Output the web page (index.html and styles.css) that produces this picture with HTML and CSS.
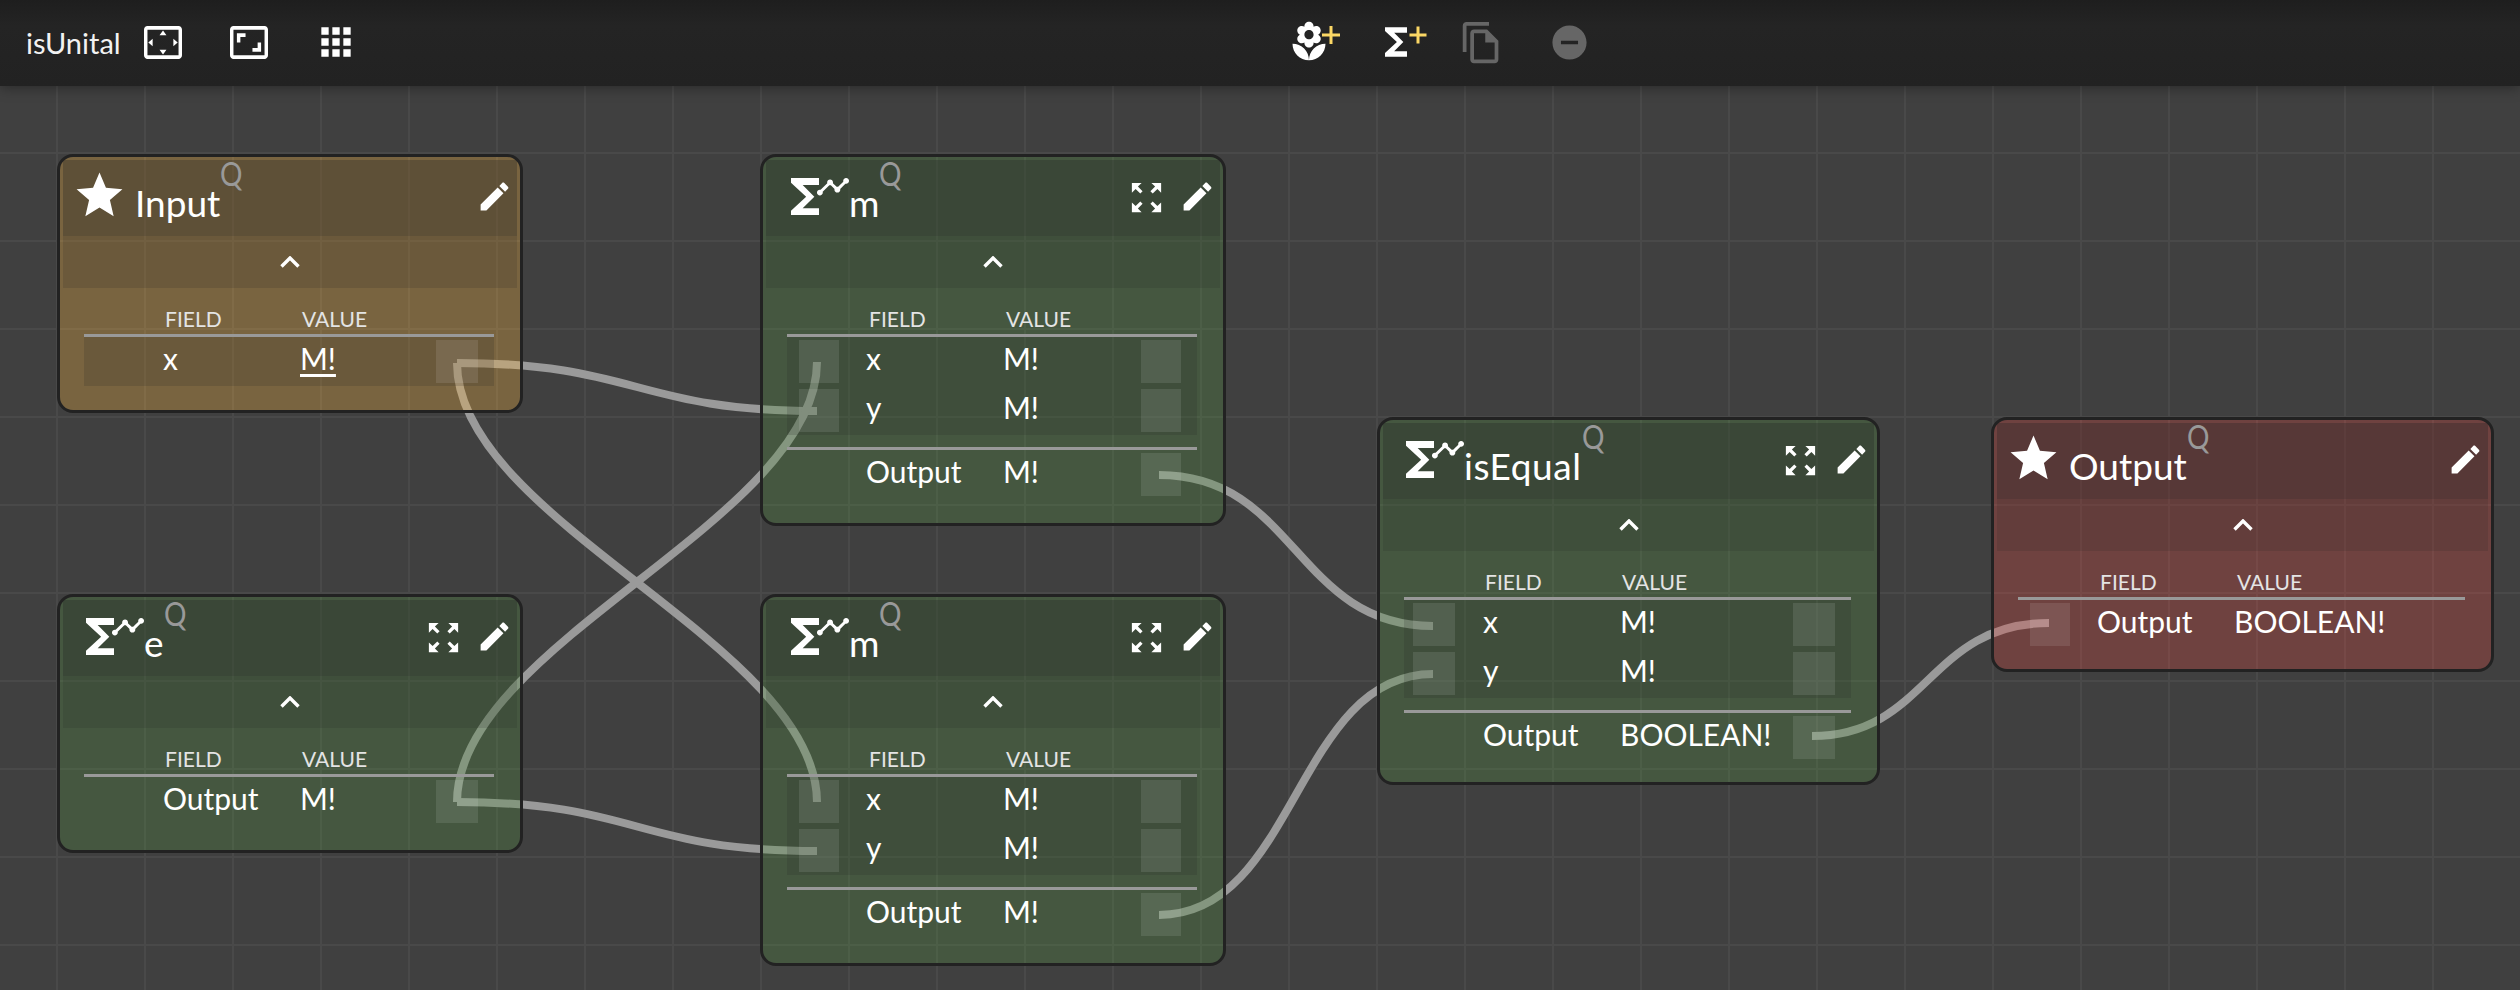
FILE: index.html
```html
<!DOCTYPE html>
<html lang="en">
<head>
<meta charset="utf-8">
<title>isUnital</title>
<link rel="stylesheet" href="styles.css">
</head>
<body>
<svg class="sprite" aria-hidden="true">
  <symbol id="i-star" viewBox="0 0 24 24"><path d="M12 17.27L18.18 21l-1.64-7.03L22 9.24l-7.19-.61L12 2 9.19 8.63 2 9.24l5.46 4.73L5.82 21z"/></symbol>
  <symbol id="i-edit" viewBox="0 0 24 24"><path d="M3 17.25V21h3.75L17.81 9.94l-3.75-3.75L3 17.25zM20.71 7.04c.39-.39.39-1.02 0-1.41l-2.34-2.34c-.39-.39-1.02-.39-1.41 0l-1.83 1.83 3.75 3.75 1.83-1.83z"/></symbol>
  <symbol id="i-expand" viewBox="0 0 24 24"><path d="M15 3l2.3 2.3-2.89 2.87 1.42 1.42L18.7 6.7 21 9V3zM3 9l2.3-2.3 2.87 2.89 1.42-1.42L6.7 5.3 9 3H3zm6 12l-2.3-2.3 2.89-2.87-1.42-1.42L5.3 17.3 3 15v6zm12-6l-2.3 2.3-2.87-2.89-1.42 1.42 2.89 2.87L15 21h6z"/></symbol>
  <symbol id="i-sum" viewBox="0 0 58 37">
    <path transform="translate(-14 -9.33) scale(2.333)" d="M18 4H6v2l6.5 6L6 18v2h12v-3h-7l5-5-5-5h7z"/>
    <path transform="translate(24.5 -8.75) scale(1.458)" d="M23 8c0 1.1-.9 2-2 2-.18 0-.35-.02-.51-.07l-3.56 3.55c.05.16.07.34.07.52 0 1.1-.9 2-2 2s-2-.9-2-2c0-.18.02-.36.07-.52l-2.55-2.55c-.16.05-.34.07-.52.07s-.36-.02-.52-.07l-4.55 4.56c.05.16.07.33.07.51 0 1.1-.9 2-2 2s-2-.9-2-2 .9-2 2-2c.18 0 .35.02.51.07l4.56-4.55C8.02 9.36 8 9.18 8 9c0-1.1.9-2 2-2s2 .9 2 2c0 .18-.02.36-.07.52l2.55 2.55c.16-.05.34-.07.52-.07s.36.02.52.07l3.55-3.56C19.02 8.35 19 8.18 19 8c0-1.1.9-2 2-2s2 .9 2 2z"/>
  </symbol>
  <symbol id="i-chev" viewBox="0 0 20 12"><polyline points="1.5,10.5 10,2 18.5,10.5" fill="none" stroke="#fff" stroke-width="3.4"/></symbol>
</svg>

<header class="toolbar">
  <div class="tb-title">isUnital</div>
  <svg class="tb-icon tb-frame tb-first" viewBox="1 3 22 18" preserveAspectRatio="none"><path d="M12.01 5.5L10 8h4l-1.99-2.5zM18 10v4l2.5-1.99L18 10zM6 10l-2.5 2.01L6 14v-4zm8 6h-4l2.01 2.5L14 16zm7-13H3c-1.1 0-2 .9-2 2v14c0 1.1.9 2 2 2h18c1.1 0 2-.9 2-2V5c0-1.1-.9-2-2-2zm0 16.01H3V4.99h18v14.02z"/></svg>
  <svg class="tb-icon tb-frame tb-second" viewBox="1 3 22 18" preserveAspectRatio="none"><path d="M19 12h-2v3h-3v2h5v-5zM7 9h3V7H5v5h2V9zm14-6H3c-1.1 0-2 .9-2 2v14c0 1.1.9 2 2 2h18c1.1 0 2-.9 2-2V5c0-1.1-.9-2-2-2zm0 16.01H3V4.99h18v14.02z"/></svg>
  <svg class="tb-icon tb-apps" viewBox="0 0 24 24"><path d="M4 8h4V4H4v4zm6 12h4v-4h-4v4zm-6 0h4v-4H4v4zm0-6h4v-4H4v4zm6 0h4v-4h-4v4zm6-10v4h4V4h-4zm-6 4h4V4h-4v4zm6 6h4v-4h-4v4zm0 6h4v-4h-4v4z"/></svg>
  <svg class="tb-icon tb-add tb-center" viewBox="0 0 56 44">
    <path transform="scale(1.833)" d="M12 22c4.97 0 9-4.03 9-9-4.97 0-9 4.03-9 9zM5.6 10.25c0 1.38 1.12 2.5 2.5 2.5.53 0 1.01-.16 1.42-.44l-.02.19c0 1.38 1.12 2.5 2.5 2.5s2.5-1.12 2.5-2.5l-.02-.19c.4.28.89.44 1.42.44 1.38 0 2.5-1.12 2.5-2.5 0-1-.59-1.85-1.43-2.25.84-.4 1.43-1.25 1.43-2.25 0-1.38-1.12-2.5-2.5-2.5-.53 0-1.01.16-1.42.44l.02-.19C14.5 2.12 13.38 1 12 1S9.5 2.12 9.5 3.5l.02.19c-.4-.28-.89-.44-1.42-.44-1.38 0-2.5 1.12-2.5 2.5 0 1 .59 1.85 1.43 2.25-.84.4-1.43 1.25-1.43 2.25zM12 5.5c1.38 0 2.5 1.12 2.5 2.5s-1.12 2.5-2.5 2.5S9.5 9.38 9.5 8s1.12-2.5 2.5-2.5zM3 13c0 4.97 4.03 9 9 9 0-4.97-4.03-9-9-9z"/>
    <path class="plus" d="M35 15h18M44 6v18"/>
  </svg>
  <svg class="tb-icon tb-add tb-sum" viewBox="0 0 56 44">
    <path transform="scale(1.833)" d="M18 4H6v2l6.5 6L6 18v2h12v-3h-7l5-5-5-5h7z"/>
    <path class="plus" d="M35.500 15h17M44 6.500v17"/>
  </svg>
  <svg class="tb-icon tb-copy" viewBox="0 0 24 24"><path d="M16 1H4c-1.100 0-2 .9-2 2v14h2V3h12V1zm-1 4H8c-1.100 0-1.990.9-1.990 2L6 21c0 1.100.89 2 1.990 2H19c1.100 0 2-.9 2-2V11l-6-6zM8 21V7h6v5h5v9H8z"/></svg>
  <svg class="tb-icon tb-remove" viewBox="0 0 24 24"><path d="M12 2C6.480 2 2 6.480 2 12s4.480 10 10 10 10-4.480 10-10S17.520 2 12 2zm5 11H7v-2h10v2z"/></svg>
</header>

<main class="canvas">
  <svg class="wires" viewBox="0 86 2520 904">
    <path d="M457 363C637 363 637 411 817 411"/>
    <path d="M457 363C457 521 817 644 817 802"/>
    <path d="M457 802C457 644 817 520 817 362"/>
    <path d="M457 802C637 802 637 851 817 851"/>
    <path d="M1159 475C1296 475 1296 626 1433 626"/>
    <path d="M1159 915C1296 915 1296 674 1433 674"/>
    <path d="M1812 736C1928 736 1928 623 2049 623"/>
  </svg>

  <section class="node brown pos-input">
    <div class="n-head">
      <svg class="ic-star"><use href="#i-star"/></svg>
      <span class="n-title t-star">Input</span><span class="n-q">Q</span>
      <span class="n-actions"><svg class="ic-edit"><use href="#i-edit"/></svg></span>
    </div>
    <div class="n-collapse"><svg class="ic-chev"><use href="#i-chev"/></svg></div>
    <div class="n-table">
      <div class="row r-head"><span></span><span>FIELD</span><span>VALUE</span></div>
      <div class="rows shaded">
        <div class="row"><span></span><span>x</span><span class="link">M!</span><span class="port"></span></div>
      </div>
    </div>
  </section>

  <section class="node green pos-m1 ported">
    <div class="n-head">
      <svg class="ic-sum wide"><use href="#i-sum"/></svg>
      <span class="n-title">m</span><span class="n-q">Q</span>
      <span class="n-actions"><svg class="ic-expand"><use href="#i-expand"/></svg><svg class="ic-edit"><use href="#i-edit"/></svg></span>
    </div>
    <div class="n-collapse"><svg class="ic-chev"><use href="#i-chev"/></svg></div>
    <div class="n-table">
      <div class="row r-head"><span></span><span>FIELD</span><span>VALUE</span></div>
      <div class="rows shaded">
        <div class="row"><span class="port"></span><span>x</span><span>M!</span><span class="port"></span></div>
        <div class="row"><span class="port"></span><span>y</span><span>M!</span><span class="port"></span></div>
      </div>
      <div class="rule"></div>
      <div class="row"><span></span><span>Output</span><span>M!</span><span class="port"></span></div>
    </div>
  </section>

  <section class="node green pos-e">
    <div class="n-head">
      <svg class="ic-sum"><use href="#i-sum"/></svg>
      <span class="n-title">e</span><span class="n-q">Q</span>
      <span class="n-actions"><svg class="ic-expand"><use href="#i-expand"/></svg><svg class="ic-edit"><use href="#i-edit"/></svg></span>
    </div>
    <div class="n-collapse"><svg class="ic-chev"><use href="#i-chev"/></svg></div>
    <div class="n-table">
      <div class="row r-head"><span></span><span>FIELD</span><span>VALUE</span></div>
      <div class="rows">
        <div class="row"><span></span><span>Output</span><span>M!</span><span class="port"></span></div>
      </div>
    </div>
  </section>

  <section class="node green pos-m2 ported">
    <div class="n-head">
      <svg class="ic-sum wide"><use href="#i-sum"/></svg>
      <span class="n-title">m</span><span class="n-q">Q</span>
      <span class="n-actions"><svg class="ic-expand"><use href="#i-expand"/></svg><svg class="ic-edit"><use href="#i-edit"/></svg></span>
    </div>
    <div class="n-collapse"><svg class="ic-chev"><use href="#i-chev"/></svg></div>
    <div class="n-table">
      <div class="row r-head"><span></span><span>FIELD</span><span>VALUE</span></div>
      <div class="rows shaded">
        <div class="row"><span class="port"></span><span>x</span><span>M!</span><span class="port"></span></div>
        <div class="row"><span class="port"></span><span>y</span><span>M!</span><span class="port"></span></div>
      </div>
      <div class="rule"></div>
      <div class="row"><span></span><span>Output</span><span>M!</span><span class="port"></span></div>
    </div>
  </section>

  <section class="node green pos-eq short">
    <div class="n-head">
      <svg class="ic-sum"><use href="#i-sum"/></svg>
      <span class="n-title t-long">isEqual</span><span class="n-q">Q</span>
      <span class="n-actions"><svg class="ic-expand"><use href="#i-expand"/></svg><svg class="ic-edit"><use href="#i-edit"/></svg></span>
    </div>
    <div class="n-collapse"><svg class="ic-chev"><use href="#i-chev"/></svg></div>
    <div class="n-table">
      <div class="row r-head"><span></span><span>FIELD</span><span>VALUE</span></div>
      <div class="rows shaded">
        <div class="row"><span class="port"></span><span>x</span><span>M!</span><span class="port"></span></div>
        <div class="row"><span class="port"></span><span>y</span><span>M!</span><span class="port"></span></div>
      </div>
      <div class="rule"></div>
      <div class="row"><span></span><span>Output</span><span>BOOLEAN!</span><span class="port"></span></div>
    </div>
  </section>

  <section class="node red pos-out short ported">
    <div class="n-head">
      <svg class="ic-star"><use href="#i-star"/></svg>
      <span class="n-title t-star">Output</span><span class="n-q">Q</span>
      <span class="n-actions"><svg class="ic-edit"><use href="#i-edit"/></svg></span>
    </div>
    <div class="n-collapse"><svg class="ic-chev"><use href="#i-chev"/></svg></div>
    <div class="n-table">
      <div class="row r-head"><span></span><span>FIELD</span><span>VALUE</span></div>
      <div class="rows">
        <div class="row"><span class="port"></span><span>Output</span><span>BOOLEAN!</span></div>
      </div>
    </div>
  </section>
</main>
</body>
</html>
```
FILE: styles.css
```css
* { box-sizing: border-box; }
html, body { margin: 0; height: 100%; }
body {
  display: flex;
  flex-direction: column;
  width: 2520px;
  height: 990px;
  overflow: hidden;
  background: #404040;
  color: #fff;
  font-family: Lato, "Noto Sans", sans-serif;
}
.sprite { display: none; }

/* toolbar */
.toolbar {
  flex: none;
  position: relative;
  z-index: 2;
  display: flex;
  align-items: center;
  height: 86px;
  padding: 0 0 2px 26px;
  background: linear-gradient(#1e1e1e, #242424 30%, #222 100%);
  box-shadow: 0 2px 12px rgba(0, 0, 0, .35);
}
.tb-title { width: 118px; font-size: 29px; line-height: 1; color: #f2f2f2; }
.tb-icon { flex: none; fill: #fff; }
.tb-frame { width: 38px; height: 33px; }
.tb-first { margin-right: 48px; }
.tb-second { margin-right: 46px; }
.tb-apps { width: 44px; height: 44px; }
.tb-add { width: 56px; height: 44px; }
.tb-center { margin-left: 929px; }
.tb-sum { margin-left: 31px; }
.plus { fill: none; stroke: #fbd765; stroke-width: 3; }
.tb-copy { width: 45px; height: 45px; margin-left: 29px; fill: #666; }
.tb-remove { width: 41px; height: 41px; margin-left: 45px; fill: #666; }

/* canvas */
.canvas {
  flex: 1;
  position: relative;
  background-color: #404040;
  background-image:
    linear-gradient(#494949 2px, transparent 2px),
    linear-gradient(90deg, #494949 2px, transparent 2px);
  background-size: 88px 88px;
  background-position: 56px 66px;
}
.wires { position: absolute; left: 0; top: 0; width: 2520px; height: 904px; }
.wires path { fill: none; stroke: #9a9a9a; stroke-width: 8; }

/* nodes */
.node {
  --c1: 79px;
  --c2: 137px;
  --pw: 42px;
  --pl: 0px;
  position: absolute;
  display: flex;
  flex-direction: column;
  width: 466px;
  padding-top: 3px;
  padding-bottom: 24px;
  border: 3px solid #222;
  border-radius: 16px;
}
.short { padding-bottom: 20px; }
.brown { background: rgba(255, 184, 67, .3); }
.green { background: rgba(84, 141, 67, .3); }
.red { background: rgba(221, 74, 67, .3); }
.ported { --pw: 40px; --pl: 12px; }

.pos-input { left: 57px; top: 68px; }
.pos-m1 { left: 760px; top: 68px; }
.pos-e { left: 57px; top: 508px; }
.pos-m2 { left: 760px; top: 508px; }
.pos-eq { left: 1377px; top: 331px; width: 503px; --pl: 9px; }
.pos-out { left: 1991px; top: 331px; width: 503px; }

.n-head {
  display: flex;
  align-items: flex-start;
  height: 76px;
  margin: 0 3px;
  padding-right: 4px;
  background: rgba(36, 36, 36, .31);
}
.ic-star { flex: none; width: 55px; height: 55px; margin: 8px 0 0 9px; fill: #fff; }
.ic-sum { flex: none; width: 58px; height: 37px; margin: 18px 0 0 23px; fill: #fff; }
.ic-sum.wide { margin-left: 25px; }
.n-title { margin-top: 24px; font-size: 37px; line-height: 1; }
.t-star { margin-left: 8px; }
.t-long { letter-spacing: .6px; }
.n-q {
  margin: -3px 0 0 0;
  font-size: 33px;
  line-height: 1;
  color: #999;
  transform: scaleX(.85);
  transform-origin: 0 0;
}
.n-actions { display: flex; gap: 13px; margin: 18px 0 0 auto; }
.ic-expand { width: 39px; height: 39px; fill: #fff; }
.ic-edit { width: 37px; height: 37px; fill: #fff; }

.n-collapse {
  display: flex;
  align-items: center;
  justify-content: center;
  height: 52px;
  margin: 0 3px;
  background: rgba(35, 35, 35, .16);
}
.ic-chev { width: 20px; height: 12px; }

.n-table { display: flex; flex-direction: column; margin: 0 26px 0 24px; }
.row {
  display: grid;
  grid-template-columns: var(--c1) var(--c2) 1fr var(--pw) 16px;
  height: 49px;
  font-size: 30px;
  line-height: 43px;
}
.r-head {
  align-items: end;
  height: 49px;
  padding-bottom: 3px;
  border-bottom: 3px solid #999;
  font-size: 21px;
  line-height: 1;
  color: #e4e4e4;
}
.r-head span { padding: 0 0 2px 2px; }
.ported .r-head span { padding-left: 3px; }
.rows.shaded { background: rgba(35, 35, 35, .17); }
.rule { height: 3px; margin-top: 12px; background: #999; }
.port {
  display: block;
  height: 43px;
  margin-top: 3px;
  background: rgba(255, 255, 255, .1);
}
.row > .port:first-child { width: var(--pw); margin-left: var(--pl); }
.link { text-decoration: underline; text-decoration-thickness: 2.5px; text-underline-offset: 4px; }
```
